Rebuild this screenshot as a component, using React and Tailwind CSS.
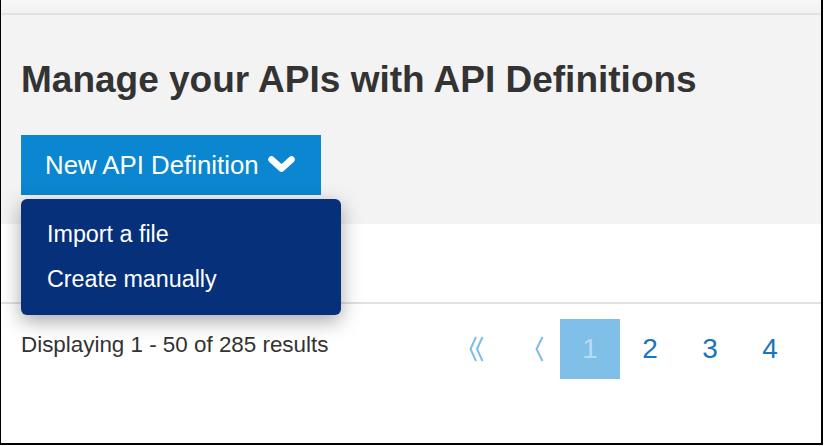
export default function App() {
  const font = { fontFamily: '"Liberation Sans", Arial, sans-serif' };
  return (
    <div className="w-[824px] h-[446px] bg-white" style={font}>
      <div className="relative w-[823px] h-[445px] border-l border-r-2 border-b-2 border-black flex flex-col overflow-hidden">
        <div className="h-[13px] bg-gradient-to-b from-[#f8f8f8] to-[#f1f1f1]"></div>
        <div className="h-[2px] bg-[#e2e2e2]"></div>
        <div className="bg-[#f3f3f3] h-[209px] pl-[20px] pt-[46px]">
          <h1 className="text-[37px] leading-none font-bold text-[#333333] whitespace-nowrap">
            Manage your APIs with API Definitions
          </h1>
          <div className="mt-[37px] w-[300px] h-[60px] bg-[#0a87d0] flex items-center pl-[24px] text-white">
            <span className="text-[25.8px] leading-[60px] whitespace-nowrap">New API Definition</span>
            <svg className="ml-[9px] mt-[-2px]" width="27" height="16" viewBox="0 0 27 16">
              <polyline points="3.5,3.5 13.5,12.5 23.5,3.5" fill="none" stroke="white" strokeWidth="6.5" strokeLinecap="round" strokeLinejoin="round" />
            </svg>
          </div>
        </div>
        <div className="h-[78px] bg-white"></div>
        <div className="h-[2px] bg-[#e1e1e1]"></div>
        <div className="flex pl-[20px] pt-[15px]">
          <div className="mt-[11px] text-[22.4px] leading-[30px] text-[#333333] whitespace-nowrap">
            Displaying 1 - 50 of 285 results
          </div>
          <div className="ml-auto mr-[21px] flex">
            <div className="w-[60px] h-[60px] flex items-center justify-end pr-[16px]">
              <svg width="15" height="26" viewBox="0 0 15 26">
                <polyline points="7,1 1.5,13 7,25" fill="none" stroke="#7ebde9" strokeWidth="2" />
                <polyline points="13.5,1 8,13 13.5,25" fill="none" stroke="#7ebde9" strokeWidth="2" />
              </svg>
            </div>
            <div className="w-[60px] h-[60px] flex items-center justify-end pr-[16px]">
              <svg width="9" height="26" viewBox="0 0 9 26">
                <polyline points="7.5,1 1.5,13 7.5,25" fill="none" stroke="#7ebde9" strokeWidth="2" />
              </svg>
            </div>
            <div className="w-[60px] h-[60px] flex items-center justify-center bg-[#7fbfe8] text-[#b8dcf4] text-[28px]">1</div>
            <div className="w-[60px] h-[60px] flex items-center justify-center text-[#1a74c2] text-[28px]">2</div>
            <div className="w-[60px] h-[60px] flex items-center justify-center text-[#1a74c2] text-[28px]">3</div>
            <div className="w-[60px] h-[60px] flex items-center justify-center text-[#1a74c2] text-[28px]">4</div>
          </div>
        </div>
        <div className="absolute left-[20px] top-[199px] w-[320px] h-[116px] rounded-[6px] bg-[#06307a] shadow-[0_6px_20px_rgba(0,0,0,0.35)] pl-[26px] pt-[13px] text-white text-[23.3px]">
          <div className="leading-[45px] whitespace-nowrap">Import a file</div>
          <div className="leading-[45px] whitespace-nowrap">Create manually</div>
        </div>
      </div>
    </div>
  );
}
